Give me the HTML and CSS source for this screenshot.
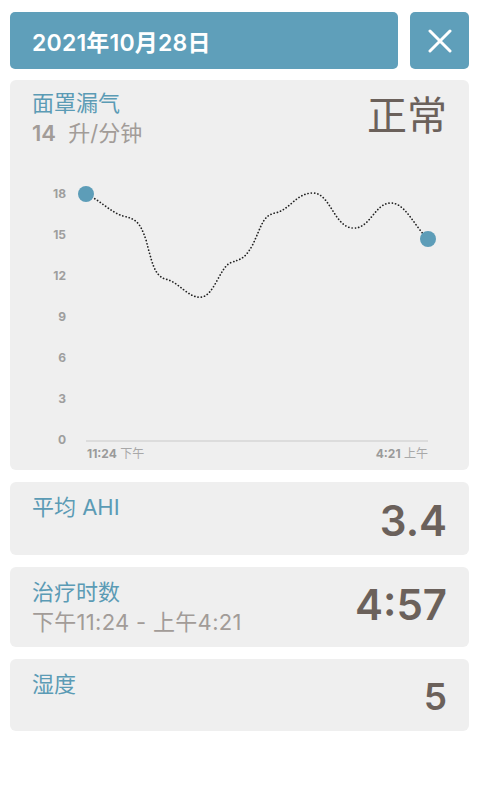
FILE: index.html
```html
<!DOCTYPE html>
<html lang="zh">
<head>
<meta charset="utf-8">
<link rel="stylesheet" href="styles.css">
</head>
<body>
<div class="top">
  <div class="date">2021年10月28日</div>
  <div class="close">
    <svg width="24" height="24" viewBox="0 0 24 24"><path d="M2 2 L22 22 M22 2 L2 22" stroke="#fff" stroke-width="3" stroke-linecap="round" fill="none"/></svg>
  </div>
</div>

<div class="card chart-card">
  <div class="card-head">
    <div>
      <div class="label">面罩漏气</div>
      <div class="sub"><span class="num">14</span>&nbsp; 升/分钟</div>
    </div>
    <div class="big cjk">正常</div>
  </div>
  <svg class="chart" width="459" height="290" viewBox="10 180 459 290">
    <g class="ylab" text-anchor="end">
      <text x="66" y="198">18</text>
      <text x="66" y="239">15</text>
      <text x="66" y="280">12</text>
      <text x="66" y="321">9</text>
      <text x="66" y="362">6</text>
      <text x="66" y="403">3</text>
      <text x="66" y="444">0</text>
    </g>
    <line x1="86" y1="441" x2="428" y2="441" stroke="#c9c9c9" stroke-width="1.2"/>
    <text class="xlab" x="87" y="458"><tspan class="b">11:24</tspan> 下午</text>
    <text class="xlab" x="428" y="458" text-anchor="end"><tspan class="b">4:21</tspan> 上午</text>
    <path d="M86 194 C100 200 110 212 123 216 C136 219 140 222 146 240 C152 262 154 275 165 279 C180 282 188 299 202 297 C214 295 220 268 230 263 C240 259 244 260 252 246 C262 226 262 216 275 213 C290 210 296 193 313 193 C330 193 334 226 352 228 C370 230 374 204 390 203 C405 202 414 226 428 239" fill="none" stroke="#222" stroke-width="1.7" stroke-dasharray="0.1 3.2" stroke-linecap="round"/>
    <circle cx="86" cy="194" r="8" fill="#5d9db8"/>
    <circle cx="428" cy="239" r="8" fill="#5d9db8"/>
  </svg>
</div>

<div class="card stat ahi">
  <div class="label">平均 AHI</div>
  <div class="big">3.4</div>
</div>

<div class="card stat hours">
  <div>
    <div class="label">治疗时数</div>
    <div class="sub">下午11:24 - 上午4:21</div>
  </div>
  <div class="big">4:57</div>
</div>

<div class="card stat humid">
  <div class="label">湿度</div>
  <div class="big">5</div>
</div>
</body>
</html>
```
FILE: styles.css
```css
html, body {
  margin: 0;
  background: #fff;
}
body {
  padding: 12px 11px 0 10px;
  font-family: Inter, "Noto Sans CJK SC", sans-serif;
}
.top {
  display: flex;
  gap: 12px;
  height: 57px;
}
.date {
  flex: 1;
  background: #5f9fba;
  border-radius: 5px;
  color: #fff;
  font-size: 23px;
  font-weight: 600;
  display: flex;
  align-items: center;
  padding-left: 22px;
  letter-spacing: 0.2px;
}
.close {
  width: 59px;
  background: #5f9fba;
  border-radius: 5px;
  display: flex;
  align-items: center;
  justify-content: center;
}
.card {
  background: #efefef;
  border-radius: 6px;
  margin-top: 11px;
}
.chart-card {
  height: 390px;
}
.card-head {
  height: 100px;
  box-sizing: border-box;
  padding: 8px 22px 0 22px;
  display: flex;
  justify-content: space-between;
  align-items: flex-start;
}
.label {
  color: #5b9bb5;
  font-size: 22px;
  line-height: 30px;
  font-weight: 400;
}
.sub {
  color: #a29c98;
  font-size: 22px;
  line-height: 30px;
  font-weight: 400;
}
.sub .num {
  font-weight: 600;
}
.hours .sub {
  letter-spacing: 0.3px;
}
.big {
  color: #6b615b;
  font-size: 42px;
  font-weight: 600;
  line-height: 1;
}
.big.cjk {
  font-weight: 400;
  font-size: 40px;
  margin-top: 8px;
}
.chart {
  display: block;
}
.ylab text {
  font-size: 12px;
  font-weight: 700;
  fill: #9e9e9e;
}
.xlab {
  font-size: 12px;
  fill: #a8a8a8;
}
.xlab .b {
  font-weight: 700;
  fill: #9a9a9a;
}
.stat {
  display: flex;
  justify-content: space-between;
  box-sizing: border-box;
  padding: 10px 22px 0 22px;
}
.ahi {
  height: 73px;
  margin-top: 12px;
}
.ahi .big {
  margin-top: 8px;
}
.hours {
  height: 80px;
  margin-top: 12px;
}
.hours .big {
  font-size: 42px;
  margin-top: 7px;
}
.humid {
  height: 72px;
  margin-top: 12px;
}
.humid .big {
  font-size: 37px;
  margin-top: 9px;
}
```
